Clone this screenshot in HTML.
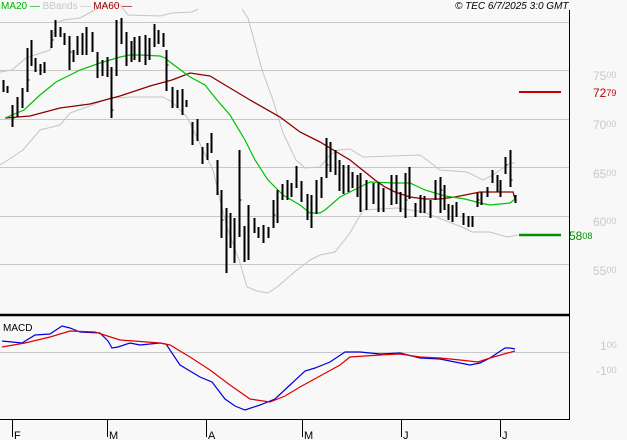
<!DOCTYPE html>
<html><head><meta charset="utf-8"><style>
body{margin:0;background:#f8f8f8;}
svg{display:block}
text{font-family:"Liberation Sans",sans-serif;}
</style></head><body>
<svg width="627" height="440" viewBox="0 0 627 440" xmlns="http://www.w3.org/2000/svg">
<rect width="627" height="440" fill="#f8f8f8"/>
<g stroke="#c8c8c8" stroke-width="1">
<line x1="0" y1="22.5" x2="569" y2="22.5"/>
<line x1="0" y1="70.5" x2="569" y2="70.5"/>
<line x1="0" y1="119.5" x2="569" y2="119.5"/>
<line x1="0" y1="167.5" x2="569" y2="167.5"/>
<line x1="0" y1="216.5" x2="569" y2="216.5"/>
<line x1="0" y1="264.5" x2="569" y2="264.5"/>
<line x1="0" y1="352.5" x2="569" y2="352.5"/>
</g>
<g fill="none" stroke="#c4c4c4" stroke-width="1">
<polyline points="0,72 12,70 26,58 50,50 56,23 64,20 80,18 104,5 120,5 128,15 160,16 172,13 192,12 198,9"/>
<polyline points="242,9 248,18 262,70 273,100 283,133 296,160 305,168 320,167 330,155 338,150 350,149 363,157 420,155 427,160 440,170 467,172 483,180 493,175 503,168 510,163 515,163"/>
<polyline points="0,165 8,160 23,150 40,130 60,125 70,113 87,107 110,98 133,97 163,97 172,102 187,117 203,150 213,170 220,200 227,227 240,263 247,287 257,291 268,293 277,287 297,270 310,260 320,255 335,252 350,233 363,210 397,208 423,212 462,227 472,232 490,232 507,237 518,235"/>
</g>
<polyline fill="none" stroke="#8b0000" stroke-width="1.3" points="5,118 30,116 60,108 90,104 120,96 150,86 172,80 190,73 210,76 230,88 250,100 280,117 300,132 320,142 335,151 350,160 365,172 375,180 385,187 395,192 410,197 425,199 440,199 455,197 470,194 480,192 490,192 505,192 513,192 515,199"/>
<polyline fill="none" stroke="#00c000" stroke-width="1.2" points="5,118 24,110 40,95 56,82 80,70 100,63 120,57 130,55 140,55 160,56 165,58 170,62 190,77 205,85 217,100 230,115 245,140 255,160 268,180 283,195 300,205 310,213 320,213 325,210 340,197 360,187 370,182 395,183 410,183 425,190 445,196 465,199 480,203 490,205 500,204 510,203 515,199"/>
<g transform="translate(0.5,0)" shape-rendering="crispEdges">
<path fill="none" stroke="#000" stroke-width="1.6" d="
M3,80V92M7,86V93M12,105V127M17,97V117M22,88V108M27,48V92M31,40V66M35,58V72M40,64V75M44,62V73M51,30V48M55,20V37M60,27V37M64,33V45M69,36V70M73,50V62M77,36V55M82,33V55M86,27V55M92,32V52M97,52V78M102,60V76M107,57V77M111,67V118M116,20V76M121,18V44M126,32V66M131,41V62M134,37V60M139,36V62M145,35V65M149,38V60M154,24V47M158,30V44M163,33V47M166,50V91M172,87V108M177,90V108M182,89V115M186,100V107
M192,122V145M197,119V141M202,147V164M207,143V160M211,133V153M217,160V195M221,190V238M226,208V273M230,213V248M234,218V263M239,150V237M244,226V262M248,205V260M254,218V233M258,227V238M263,225V243M268,227V238M273,200V228M277,190V223M282,184V200M287,180V200M291,183V197M296,166V188M301,181V202M307,194V220M311,195V228M316,180V214M321,177V198M326,138V178M330,142V172M335,150V175M339,160V191M343,165V194M348,165V192M352,172V188M357,175V197M360,173V212M366,180V210M373,183V204M378,182V212M383,188V212M391,175V205M396,175V204M400,192V212M405,173V218M409,167V199M415,203V217M420,195V213M424,196V213M430,200V218M435,180V200M440,177V213M444,185V210M448,204V220M452,205V222M456,202V217M463,213V225M468,216V227M472,216V227M477,193V207M481,192V205M487,187V197M492,170V183M497,175V192M500,180V197M505,157V174M510,150V187M515,195V203"/>
<path fill="none" stroke="#000" stroke-width="1.2" d="M12,118h2M27,80h2M51,40h2M69,52h2M111,110h2M166,65h2M221,220h2M239,200h2M273,215h2M326,165h2M405,200h2M440,190h2M477,200h2M505,165h2M510,180h2"/>
</g>
<line x1="519" y1="92" x2="561" y2="92" stroke="#c00000" stroke-width="2"/>
<line x1="519" y1="235" x2="561" y2="235" stroke="#009000" stroke-width="2.5"/>
<polyline fill="none" stroke="#0000e0" stroke-width="1.2" points="2,341 22,343 35,335 50,334 62,326 70,328 80,332 100,333 108,341 112,348 118,347 130,343 140,345 160,343 166,344 180,365 200,377 212,382 225,399 235,406 245,410 260,405 275,399 290,385 305,371 315,368 330,362 345,352 360,352 380,354 400,353 420,358 440,359 460,363 470,365 480,363 490,358 505,348 510,348 515,349"/>
<polyline fill="none" stroke="#e00000" stroke-width="1.2" points="2,347 25,343 50,337 70,331 95,332 120,340 160,343 170,345 190,357 210,370 230,385 250,399 270,402 285,396 300,387 320,376 340,365 350,357 380,355 400,354 420,357 440,358 460,360 478,362 490,358 515,351"/>
<line x1="0" y1="315" x2="570" y2="315" stroke="#000" stroke-width="2.5"/>
<line x1="0" y1="419.5" x2="570" y2="419.5" stroke="#000" stroke-width="1"/>
<line x1="569.5" y1="10" x2="569.5" y2="420" stroke="#000" stroke-width="1"/>
<g stroke="#000" stroke-width="1"><path d="M12.5,419V437M107.5,419V437M206.5,419V437M302.5,419V437M401.5,419V437M500.5,419V437"/></g>
<g font-size="11" fill="#000"><text x="14" y="439">F</text><text x="109" y="439">M</text><text x="208" y="439">A</text><text x="304" y="439">M</text><text x="403" y="439">J</text><text x="502" y="439">J</text></g>
<text x="3" y="331" font-size="10" fill="#000">MACD</text>
<g font-size="12" fill="#c8c8c8">
<text x="593" y="80">75<tspan font-size="9" dy="-2">00</tspan></text>
<text x="593" y="129">70<tspan font-size="9" dy="-2">00</tspan></text>
<text x="593" y="178">65<tspan font-size="9" dy="-2">00</tspan></text>
<text x="593" y="226">60<tspan font-size="9" dy="-2">00</tspan></text>
<text x="593" y="275">55<tspan font-size="9" dy="-2">00</tspan></text>
<text x="600" y="350">1<tspan font-size="9" dy="-2">00</tspan></text>
<text x="596" y="375">-1<tspan font-size="9" dy="-2">00</tspan></text>
</g>
<text x="593" y="97" font-size="12" fill="#c00000">72<tspan font-size="9" dy="-1">79</tspan></text>
<text x="569" y="240" font-size="12" fill="#009000">58<tspan font-size="9" dy="-1">08</tspan></text>
<text x="1" y="9" font-size="10"><tspan fill="#00b000">MA20 —</tspan><tspan fill="#c8c8c8"> BBands —</tspan><tspan fill="#a00000"> MA60 —</tspan></text>
<text x="455" y="9" font-size="10" font-style="italic" fill="#000">© TEC 6/7/2025 3:0 GMT</text>
</svg>
</body></html>
